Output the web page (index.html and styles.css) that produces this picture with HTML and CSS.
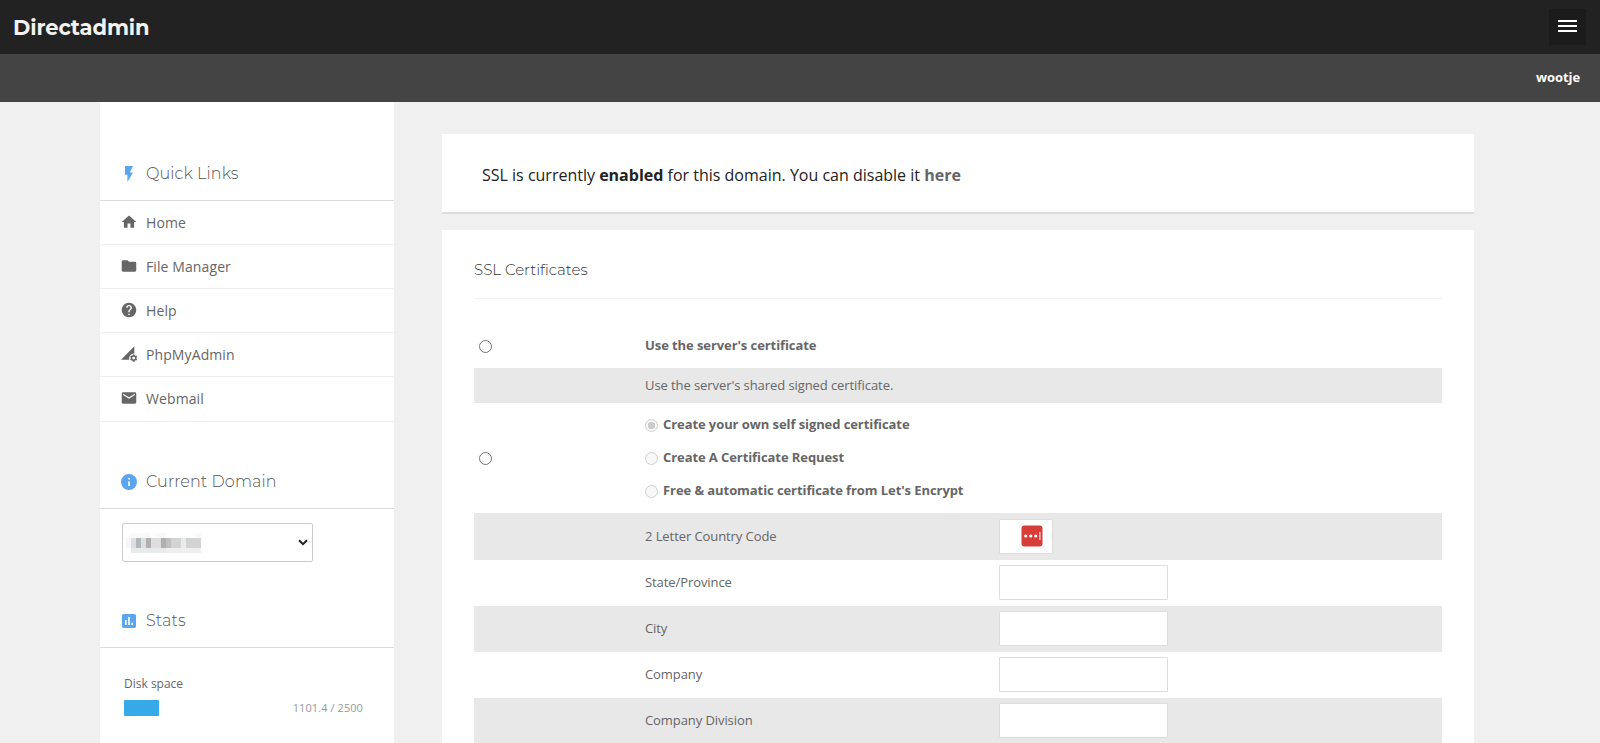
FILE: index.html
```html
<!DOCTYPE html>
<html lang="en">
<head>
<meta charset="utf-8">
<title>Directadmin</title>
<link rel="stylesheet" href="styles.css">
</head>
<body>
<header class="topbar">
  <div class="brand">Directadmin</div>
  <button class="menu" aria-label="Menu"><i></i><i></i><i></i></button>
</header>
<div class="userbar"><b>wootje</b></div>
<div class="page">
  <aside class="sidebar">
    <h2 class="side-title first"><svg viewBox="2 2 20 20"><path d="M7 2v11h3v9l7-12h-4l4-8z"/></svg><span>Quick Links</span></h2>
    <nav>
      <a><svg viewBox="1 1 22 22"><path d="M10 20v-6h4v6h5v-8h3L12 3 2 12h3v8z"/></svg>Home</a>
      <a><svg viewBox="1 1 22 22"><path d="M10 4H4a2 2 0 0 0-2 2v12c0 1.100.9 2 2 2h16a2 2 0 0 0 2-2V8a2 2 0 0 0-2-2h-8z"/></svg>File Manager</a>
      <a><svg viewBox="1 1 22 22"><path d="M12 2C6.480 2 2 6.480 2 12s4.480 10 10 10 10-4.480 10-10S17.520 2 12 2zm1 17h-2v-2h2v2zm2.070-7.750l-.9.920C13.450 12.900 13 13.500 13 15h-2v-.5c0-1.100.45-2.100 1.170-2.830l1.240-1.260c.37-.36.59-.86.59-1.410 0-1.100-.9-2-2-2s-2 .9-2 2H8c0-2.210 1.790-4 4-4s4 1.790 4 4c0 .88-.36 1.680-.93 2.250z"/></svg>Help</a>
      <a><svg viewBox="0 0 24 24"><path d="M0 20.500 20 .5v10.800a7.500 7.500 0 0 0-7.800 9.200z"/><path fill-rule="evenodd" d="m17.300 14.200.3-1.500h2.800l.3 1.500 1 .6 1.400-.5 1.200 2.200-1.100 1v1.200l1.100 1-1.200 2.200-1.400-.5-1 .6-.3 1.500h-2.800l-.3-1.500-1-.6-1.400.5-1.200-2.200 1.100-1v-1.200l-1.100-1 1.200-2.200 1.400.5zM19 16a2.100 2.100 0 1 0 0 4.200 2.100 2.100 0 0 0 0-4.200z"/></svg>PhpMyAdmin</a>
      <a><svg viewBox="1 1 22 22"><path d="M20 4H4a2 2 0 0 0-2 2v12c0 1.100.9 2 2 2h16a2 2 0 0 0 2-2V6a2 2 0 0 0-2-2zm0 4-8 5-8-5V6l8 5 8-5z"/></svg>Webmail</a>
    </nav>
    <h2 class="side-title"><svg viewBox="0 0 24 24"><path d="M12 0a12 12 0 1 0 0 24 12 12 0 0 0 0-24zm1.200 18h-2.400v-7.200h2.400zm0-9.600h-2.400V6h2.400z"/></svg><span>Current Domain</span></h2>
    <div class="domain">
      <svg class="redacted" viewBox="0 0 15 4" preserveAspectRatio="none" shape-rendering="crispEdges">
        <path fill="#f9f9f9" d="M1 0h4v1h-4zM6 0h2v1h-2zM14 0h1v1h-1z"/>
        <path fill="#f6f6f6" d="M0 1h1v2h-1z"/>
        <path fill="#dedede" d="M1 1h1v2h-1zM3 1h1v2h-1zM5 1h2v2h-2z"/>
        <path fill="#b0b8bb" d="M2 1h1v2h-1z"/>
        <path fill="#b3afb0" d="M4 1h1v2h-1zM7 1h1v2h-1z"/>
        <path fill="#bfc1c1" d="M8 1h1v2h-1z"/>
        <path fill="#d2d4d4" d="M9 1h2v2h-2zM12 1h3v2h-3z"/>
        <path fill="#e8eaeb" d="M11 1h1v2h-1zM1 3h7v1h-7z"/>
        <path fill="#efefef" d="M8 3h7v1h-7z"/>
      </svg>
      <svg class="arrow" viewBox="0 0 10 7"><path d="M1 1.200 5 5.200l4-4"/></svg>
    </div>
    <h2 class="side-title stats-title"><svg viewBox="0 0 24 24"><path d="M20 1.500H4A2.500 2.500 0 0 0 1.500 4v16A2.500 2.500 0 0 0 4 22.500h16a2.500 2.500 0 0 0 2.500-2.500V4A2.500 2.500 0 0 0 20 1.500zM8.500 18H6v-7.500h2.500zm4.800 0h-2.500V6h2.500zm4.700 0h-2.500v-3.500H18z"/></svg><span>Stats</span></h2>
    <div class="disk">
      <div>Disk space</div>
      <div class="meter"><i></i><span>1101.4 / 2500</span></div>
    </div>
  </aside>
  <main>
    <section class="notice">SSL is currently <b>enabled</b> for this domain. You can disable it <b class="link">here</b></section>
    <section class="card">
      <h1>SSL Certificates</h1>
      <div class="row head"><div><span class="radio"></span></div><b>Use the server's certificate</b></div>
      <div class="row note grey"><div></div><span>Use the server's shared signed certificate.</span></div>
      <div class="row options"><div><span class="radio"></span></div>
        <div class="choices">
          <label><span class="radio off on"></span><b>Create your own self signed certificate</b></label>
          <label><span class="radio off"></span><b>Create A Certificate Request</b></label>
          <label><span class="radio off"></span><b>Free &amp; automatic certificate from Let's Encrypt</b></label>
        </div>
      </div>
      <div class="row field grey country"><div></div><span>2 Letter Country Code</span><div class="input short"><svg viewBox="0 0 22 22"><rect x=".5" y=".5" width="21" height="21" rx="3"/><circle cx="4.700" cy="11" r="1.600"/><circle cx="9.700" cy="11" r="1.600"/><circle cx="14.700" cy="11" r="1.600"/><path d="M18.900 7v8"/></svg></div></div>
      <div class="row field"><div></div><span>State/Province</span><div class="input"></div></div>
      <div class="row field grey"><div></div><span>City</span><div class="input"></div></div>
      <div class="row field"><div></div><span>Company</span><div class="input"></div></div>
      <div class="row field grey"><div></div><span>Company Division</span><div class="input"></div></div>
    </section>
  </main>
</div>
</body>
</html>
```
FILE: styles.css
```css
* { box-sizing: border-box; }
html, body { height: 100%; overflow: hidden; }
body { margin: 0; background: #f0f0f0; color: #666; font: 13px/20px "Open Sans", sans-serif; display: flex; flex-direction: column; }
.topbar { flex: none; height: 54px; background: #222; display: flex; align-items: center; justify-content: space-between; padding: 0 14px 0 13px; }
.brand { padding-top: 2px; color: #f2f2f2; font: 700 21px/52px Montserrat, Inter, sans-serif; letter-spacing: -.1px; }
.menu { width: 37px; height: 36px; padding: 0 9px 2px; border: 0; background: #1b1b1b; display: flex; flex-direction: column; justify-content: center; gap: 3px; }
.menu i { display: block; height: 2px; background: #fff; }
.userbar { flex: none; height: 48px; background: #444; color: #fff; display: flex; align-items: center; justify-content: flex-end; padding: 0 20px 2px; letter-spacing: -.1px; }
.page { flex: 1; min-height: 0; display: flex; padding: 0 126px 0 100px; gap: 48px; }
.sidebar { width: 294px; background: #fff; overflow: hidden; }
.side-title { margin: 0; height: 87px; padding: 33px 0 0 21px; border-bottom: 1px solid #ddd; display: flex; align-items: center; gap: 9px; font: 300 16px/20px Montserrat, Inter, sans-serif; letter-spacing: .1px; color: #555; }
.side-title.first { height: 99px; padding-top: 45px; }
.side-title svg { width: 16px; height: 16px; fill: #5aa5ee; }
.sidebar nav a { height: 44px; padding-left: 21px; border-bottom: 1px solid #f0f0f0; display: flex; align-items: center; gap: 9px; font-size: 14px; letter-spacing: .1px; }
.sidebar nav a:last-child { height: 45px; padding-bottom: 1px; }
.sidebar nav svg { width: 16px; height: 16px; margin-top: -1px; fill: #666; }
.domain { width: 191px; height: 39px; margin: 14px 0 0 22px; padding: 0 4px 0 3px; border: 1px solid #ccc; border-radius: 2px; display: flex; align-items: center; justify-content: space-between; }
.arrow { width: 10px; height: 7px; fill: none; stroke: #222; stroke-width: 2; }
.redacted { width: 75px; height: 20px; }
.stats-title { height: 86px; }
.disk { padding: 26px 31px 0 24px; font-size: 12px; }
.meter { display: flex; align-items: center; justify-content: space-between; margin-top: 4px; font-size: 11px; letter-spacing: .08px; color: #999; }
.meter i { width: 35px; height: 16px; border-radius: 1px; background: #36a9e8; }
main { flex: 1; padding-top: 32px; overflow: hidden; }
.notice { height: 80px; padding: 0 40px; background: #fff; border-bottom: 2px solid #ddd; color: #222; font-size: 16px; line-height: 82px; }
.notice .link { color: #666; }
.card { margin-top: 16px; padding: 0 32px; background: #fff; }
.card h1 { margin: 0 0 24px; height: 69px; border-bottom: 1px solid #f3f3f3; color: #333; font: 300 15px/80px Montserrat, Inter, sans-serif; }
.row { display: grid; grid-template-columns: 171px 354px 1fr; align-items: center; }
.row > :first-child { padding-left: 5px; display: flex; }
.row b, .row > span { letter-spacing: -.08px; padding-bottom: 2px; }
.grey { background: #e8e8e8; }
.head { height: 45px; }
.head .radio { margin-top: 1px; }
.note { height: 35px; }
.options { height: 110px; }
.radio { flex: none; width: 13px; height: 13px; border: 1px solid #767676; border-radius: 50%; background: #fff; }
.radio.off { border-color: #d0d0d0; background: #f8f8f8; }
.radio.on { background: radial-gradient(circle, #ccc 0 3.500px, #f8f8f8 4px); }
.choices { display: grid; grid-auto-rows: 33px; white-space: nowrap; }
.choices label { display: flex; align-items: center; gap: 5px; }
.field { height: 46px; }
.country { height: 47px; }
.input { width: 169px; height: 35px; margin-bottom: 1px; border: 1px solid #ddd; border-radius: 1px; background: #fff; }
.short { width: 54px; display: flex; align-items: center; justify-content: flex-end; padding: 0 9px 1px 0; }
.short svg { width: 22px; height: 22px; }
.short rect { fill: #d73e3a; }
.short circle { fill: #fff; }
.short path { stroke: #fff; }
```
